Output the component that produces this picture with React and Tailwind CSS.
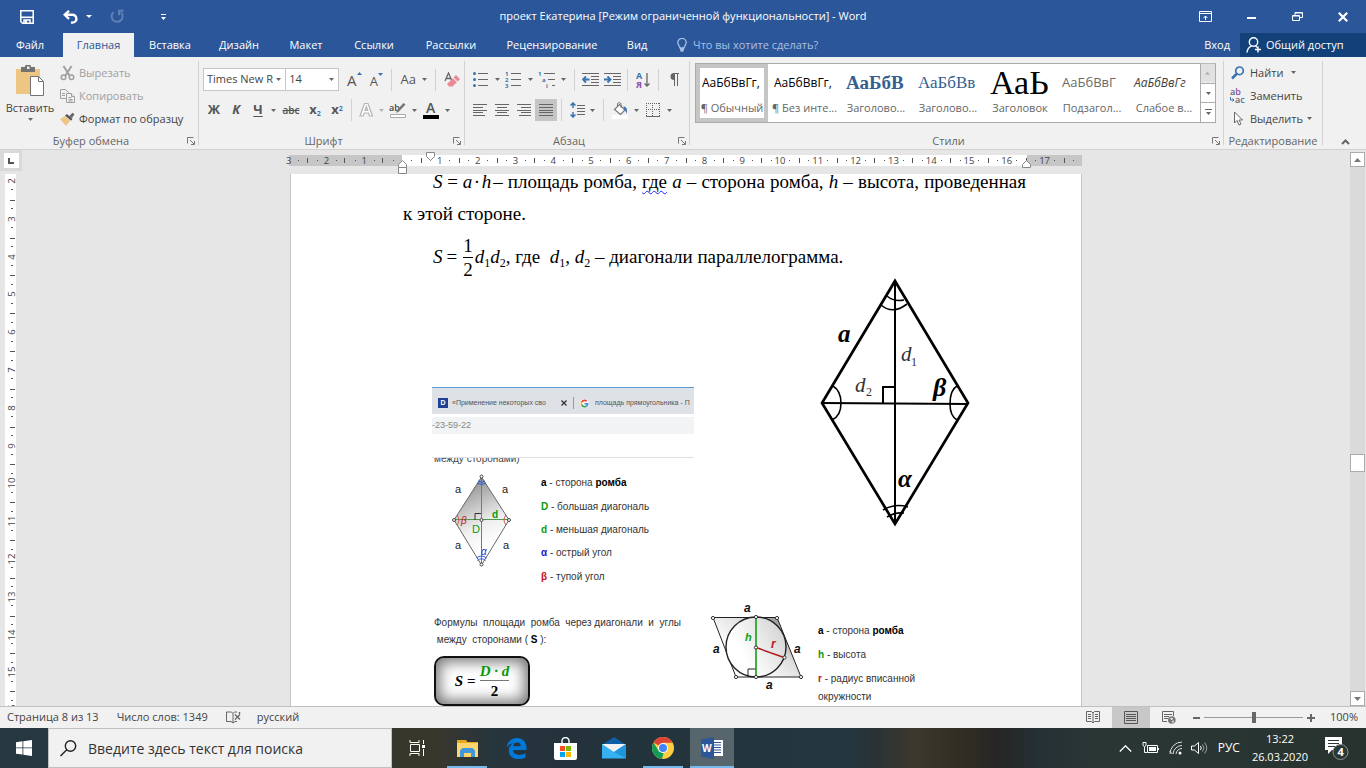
import React from "react";

const ui = "font-['Open_Sans','Noto_Sans',sans-serif]";
const serif = "font-['Liberation_Serif',serif]";

function Caret({ className = "text-[#666]" }) {
  return (
    <svg width="5" height="3" viewBox="0 0 5 3" className={className} aria-hidden="true">
      <path d="M0 0h5L2.500 3z" fill="currentColor" />
    </svg>
  );
}

function Drop({ label, light }) {
  return (
    <button aria-label={label} className="flex h-full w-[9px] items-center justify-center">
      <Caret className={light ? "text-[#b5b5b5]" : "text-[#666]"} />
    </button>
  );
}

function Sep({ className = "mx-1" }) {
  return <div className={`h-[22px] w-px shrink-0 bg-[#d2d2d2] ${className}`} />;
}

function Tool({ label, wide, active, children }) {
  return (
    <button
      aria-label={label}
      className={`flex h-[22px] shrink-0 items-center justify-center text-[#555] ${wide ? "w-6" : "w-[22px]"} ${active ? "bg-[#c5c5c5]" : ""}`}
    >
      {children}
    </button>
  );
}

function Launcher({ label }) {
  return (
    <button aria-label={label} className="absolute right-0.5 -bottom-px p-px">
      <svg width="8" height="8" viewBox="0 0 8 8" fill="none" stroke="#777">
        <path d="M.5 6.500V.5H6.500" />
        <path d="M3 3l4 4M7.500 4v3.500H4" />
      </svg>
    </button>
  );
}

function Group({ title, width, launcher, children }) {
  return (
    <section className={`my-1 flex flex-col border-r border-[#d2d2d2] ${width}`}>
      <div className="flex-1">{children}</div>
      <div className={`relative h-[13px] text-center text-[11px] leading-[18px] text-[#666] ${launcher ? "pr-4" : ""}`}>
        {title}
        {launcher && <Launcher label={`${title}: параметры`} />}
      </div>
    </section>
  );
}

function Lines({ rows }) {
  return (
    <svg width="16" height="12" viewBox="0 0 16 12" stroke="#666" aria-hidden="true">
      {rows.map(([a, b], i) => (
        <path key={i} d={`M${a} ${i * 2.75 + 0.5}H${b}`} shapeRendering="crispEdges" />
      ))}
    </svg>
  );
}

function TitleBar() {
  return (
    <header className="flex h-[33px] items-center text-white">
      <div className="flex flex-1 items-center">
        <button aria-label="Сохранить" className="ml-5">
          <svg width="14" height="14" viewBox="0 0 14 14" fill="none" stroke="#fff" strokeWidth="1.500">
            <path d="M.8.8h12.400v12.400H2.500L.8 11.500z" />
            <path d="M1 7.300h12" strokeWidth="1.600" />
            <path d="M4 13V10h6v3" />
            <path d="M5 10h2v3H5z" fill="#fff" stroke="none" />
          </svg>
        </button>
        <button aria-label="Отменить" className="ml-[29px]">
          <svg width="15" height="14" viewBox="0 0 15 14" fill="none" stroke="#fff" strokeWidth="2.400">
            <path d="M6 0.800L1.700 4.800 6 8.800" />
            <path d="M2 4.800h7.500a3.900 3.900 0 0 1 0 7.800H8" />
          </svg>
        </button>
        <button aria-label="Список отмены" className="ml-2">
          <svg width="6" height="3" viewBox="0 0 6 3"><path d="M0 0h6L3 3z" fill="#fff" /></svg>
        </button>
        <button aria-label="Повторить" className="ml-[18px]">
          <svg width="15" height="15" viewBox="0 0 15 15" fill="none" stroke="#5f7fb5" strokeWidth="2">
            <path d="M3.500 3.200a5.500 5.500 0 1 0 7.500.2" />
            <path d="M13.500 1.800H9v4.500" />
          </svg>
        </button>
        <button aria-label="Настройка панели" className="ml-[35px]">
          <svg width="7" height="6" viewBox="0 0 7 6" fill="#fff"><path d="M1 0h5v1H1zM1 3h5L3.500 6z" /></svg>
        </button>
      </div>
      <h1 className="text-[11px]">проект Екатерина [Режим ограниченной функциональности] - Word</h1>
      <div className="flex flex-1 items-center justify-end">
        <button aria-label="Параметры ленты" className="flex w-[46px] justify-center">
          <svg width="13" height="11" viewBox="0 0 13 11" fill="none" stroke="#fff">
            <path d="M.5.5h12v10H.5zM.5 2.500h12M6.500 9V5M4.500 7l2-2 2 2" />
          </svg>
        </button>
        <button aria-label="Свернуть" className="flex w-[46px] justify-center">
          <svg width="9" height="11" viewBox="0 0 9 11"><path d="M0 6h9v2H0z" fill="#fff" /></svg>
        </button>
        <button aria-label="Восстановить" className="flex w-[46px] justify-center">
          <svg width="11" height="11" viewBox="0 0 11 11" fill="none" stroke="#fff">
            <path d="M.5 4.500h7v5h-7zM.5 5h7M3 4V1.500h7.500v5H8M3 2h7" />
          </svg>
        </button>
        <button aria-label="Закрыть" className="flex w-[46px] justify-center">
          <svg width="10" height="10" viewBox="0 0 10 10" stroke="#fff" strokeWidth="2.200">
            <path d="M.8.8l8.400 8.400M9.200.8L.8 9.200" />
          </svg>
        </button>
      </div>
    </header>
  );
}

const tabs = [
  ["Файл", "w-[60px]"],
  ["Главная", "w-[77px]"],
  ["Вставка", "w-[66px]"],
  ["Дизайн", "w-[72px]"],
  ["Макет", "w-[62px]"],
  ["Ссылки", "w-[74px]"],
  ["Рассылки", "w-[80px]"],
  ["Рецензирование", "w-[122px]"],
  ["Вид", "w-[48px]"],
];

function TabBar() {
  return (
    <nav className="flex h-6 text-[11px] leading-6 text-white">
      {tabs.map(([name, width]) => (
        <button key={name} className={`flex justify-center ${width}`}>
          {name === "Главная" ? (
            <span className="w-[71px] bg-[#f1f1f1] text-[#2b579a]">{name}</span>
          ) : (
            name
          )}
        </button>
      ))}
      <label className="ml-4 flex flex-1 items-center gap-0.5 text-[#a9c0e3]">
        <svg width="10" height="14" viewBox="0 0 10 14" fill="none" stroke="#a9c0e3" strokeWidth="1.300">
          <path d="M3 10C3 8 .8 7 .8 4.600a4.200 4.200 0 0 1 8.400 0C9.200 7 7 8 7 10zM3 11.500h4M3.500 13h3" />
        </svg>
        <input
          type="text"
          placeholder="Что вы хотите сделать?"
          aria-label="Что вы хотите сделать?"
          className="w-44 bg-transparent px-1 outline-none placeholder:text-[#a9c0e3]"
        />
      </label>
      <button className="px-2.5">Вход</button>
      <button className="flex w-[126px] items-center gap-1 bg-[#124078] pl-1.5">
        <svg width="16" height="16" viewBox="0 0 16 16" fill="none" stroke="#fff" strokeWidth="1.400">
          <circle cx="7.500" cy="5" r="4.200" />
          <path d="M1 15.500c.4-3.500 2.300-5.600 4.500-6.300M9.500 9l2 1.500M12 9.500v6M9 12.500h6" />
        </svg>
        Общий доступ
      </button>
    </nav>
  );
}

function ClipboardGroup() {
  return (
    <Group title="Буфер обмена" width="w-[199px]" launcher>
      <div className="flex">
        <button className="mt-1 flex w-[60px] flex-col items-center text-[11px] text-[#444]">
          <svg width="30" height="31" viewBox="0 0 30 31">
            <path d="M1 4h24v25H1z" fill="#eec683" />
            <path d="M6 2h4a3 3 0 0 1 6 0h4v5H6z" fill="#737373" />
            <path d="M12 1.500h2.500V4H12z" fill="#f1f1f1" />
            <path d="M15.500 11.500h8l5 5v14h-13z" fill="#fff" stroke="#737373" />
            <path d="M23.500 11.500v5h5" fill="none" stroke="#737373" />
          </svg>
          <span className="mt-0.5 leading-5">Вставить</span>
          <Caret />
        </button>
        <div className="flex flex-col text-[11px] leading-[23px] text-[#444]">
          <button className="flex items-center gap-1 text-[#a0a0a0]">
            <svg width="15" height="16" viewBox="0 0 15 16" fill="none" stroke="#a0a0a0" strokeWidth="1.500">
              <path d="M3.500 1l6 9.500M11.500 1l-6 9.500" strokeWidth="2" />
              <circle cx="3.500" cy="12.300" r="2.300" />
              <circle cx="11.500" cy="12.300" r="2.300" />
            </svg>
            Вырезать
          </button>
          <button className="flex items-center gap-1 text-[#a0a0a0]">
            <svg width="15" height="14" viewBox="0 0 15 14" fill="#f1f1f1" stroke="#a0a0a0">
              <path d="M.5.5h5l3 3v6h-8zM2 4.500h3M2 6.500h3" />
              <path d="M6.500 4.500h5l3 3v6h-8z" />
              <path d="M11.500 4.500v3h3M8.500 8.500h3M8.500 10.500h4M8.500 12h4" />
            </svg>
            Копировать
          </button>
          <button className="flex items-center gap-1">
            <svg width="15" height="14" viewBox="0 0 15 14">
              <path d="M0 7l5-3 5 5-4 5z" fill="#eec683" />
              <path d="M5 3.500L7 2l5.500 5L11 8.800z" fill="#555" />
              <path d="M9 4.500L12.500.8l2 1.500L12 6z" fill="#666" />
            </svg>
            Формат по образцу
          </button>
        </div>
      </div>
    </Group>
  );
}

function FontGroup() {
  return (
    <Group title="Шрифт" width="w-[266px]" launcher>
      <div className="pt-[7px] pl-1">
        <div className="flex h-[23px] items-center">
          <div className="grid h-[23px] w-[86px] items-center border border-[#c6c6c6] bg-white">
            <select aria-label="Шрифт" className="col-start-1 row-start-1 w-full appearance-none bg-transparent pr-3 pl-[3px] text-[11px] text-[#444]">
              <option>Times New R</option>
            </select>
            <span className="pointer-events-none col-start-1 row-start-1 justify-self-end pr-1"><Caret /></span>
          </div>
          <div className="-ml-px grid h-[23px] w-[56px] items-center border border-[#c6c6c6] bg-white">
            <select aria-label="Размер шрифта" className="col-start-1 row-start-1 w-full appearance-none bg-transparent pr-4 pl-[3px] text-[11px] text-[#444]">
              <option>14</option>
            </select>
            <span className="pointer-events-none col-start-1 row-start-1 justify-self-end pr-1"><Caret /></span>
          </div>
          <div className="ml-1 flex">
            <Tool label="Увеличить размер">
              <span className="flex items-start text-[15px] leading-4">A<svg width="5" height="3" viewBox="0 0 5 3"><path d="M0 3h5L2.500 0z" fill="#3a73b0" /></svg></span>
            </Tool>
            <Tool label="Уменьшить размер">
              <span className="flex items-start pt-0.5 text-[13px] leading-4">A<svg width="5" height="3" viewBox="0 0 5 3"><path d="M0 0h5L2.500 3z" fill="#3a73b0" /></svg></span>
            </Tool>
          </div>
          <Sep />
          <Tool label="Регистр" wide><span className="text-[13px]">Aa</span></Tool>
          <Drop label="Список регистров" />
          <Sep className="ml-1.5 mr-1" />
          <Tool label="Очистить формат" wide>
            <svg width="16" height="16" viewBox="0 0 16 16">
              <path d="M1 9L4.500 1 8 9M2.200 6.500h4.500" fill="none" stroke="#666" strokeWidth="1.300" />
              <path d="M9.500 5.500l2.500-2.500 4 4-2.500 2.500zM3 12l5.800-5.800 4 4L8.500 14.500H5z" fill="#e88b96" />
            </svg>
          </Tool>
        </div>
        <div className="mt-2 flex h-[22px] items-center">
          <Tool label="Полужирный"><b className="text-[13px]">Ж</b></Tool>
          <Tool label="Курсив"><b className="text-[13px] italic">К</b></Tool>
          <Tool label="Подчеркнутый"><b className="text-[13px] underline underline-offset-2">Ч</b></Tool>
          <Drop label="Стиль подчеркивания" />
          <div className="px-0.5"><Tool label="Зачеркнутый"><span className="text-[10px] font-semibold line-through">abc</span></Tool></div>
          <Tool label="Подстрочный"><b className="text-[13px]">x<sub className="text-[7px] text-[#3a73b0]">2</sub></b></Tool>
          <Tool label="Надстрочный"><b className="text-[13px]">x<sup className="text-[7px] text-[#3a73b0]">2</sup></b></Tool>
          <Sep className="mx-[3px]" />
          <Tool label="Текстовые эффекты">
            <svg width="15" height="16" viewBox="0 0 15 16" fill="none" stroke="#b5b5b5" strokeWidth="1.200"><path d="M1 14L5.500 1.500h3.500L13.500 14h-3l-1-3H5.200l-1 3zM6 8.500h2.800L7.300 4.500z" fill="#fff" /></svg>
          </Tool>
          <Drop label="Список эффектов" light />
          <Tool label="Цвет выделения" wide>
            <svg width="18" height="18" viewBox="0 0 18 18">
              <text x="0" y="10" fontSize="9" fontWeight="600" fill="#444">ab</text>
              <path d="M7 12l1-3 6.500-7 2 1.500-6.500 7z" fill="#777" />
              <path d="M1.500 13.500h15v3h-15z" fill="#fff" stroke="#aaa" />
            </svg>
          </Tool>
          <Drop label="Цвета выделения" />
          <Tool label="Цвет текста" wide>
            <svg width="18" height="18" viewBox="0 0 18 18">
              <text x="4" y="12" fontSize="14" fontWeight="600" fill="#555">A</text>
              <path d="M1 14h16v4H1z" fill="#000" />
            </svg>
          </Tool>
          <Drop label="Цвета текста" />
        </div>
      </div>
    </Group>
  );
}

function ListIcon({ kind }) {
  const marks = { number: ["1", "2", "3"], multi: ["1", "a", "i"] };
  return (
    <svg width="18" height="22" viewBox="0 -3 18 22" aria-hidden="true">
      {[2, 8, 14].map((y, i) => {
        const dx = kind === "multi" ? i * 4 : 0;
        return (
          <g key={y}>
            {kind === "dot" ? (
              <circle cx="2.500" cy={y - 0.5} r="1.500" fill="#3a73b0" />
            ) : (
              <text x={dx} y={y + 2} fontSize="6" fontWeight="700" fill="#3a73b0">{marks[kind][i]}</text>
            )}
            <path d={`M${6 + dx} ${y - 0.5}H${kind === "multi" ? 17 : 16}`} stroke="#666" />
          </g>
        );
      })}
    </svg>
  );
}

function IndentIcon({ right }) {
  return (
    <svg width="17" height="14" viewBox="0 0 17 14" fill="none" aria-hidden="true">
      <path d="M0 .5h17M9 3.500h8M9 6.500h8M9 9.500h8M0 12.500h17" stroke="#666" />
      <path d={right ? "M0 6.500h6M3.500 3.500l3 3-3 3" : "M1.500 6.500h6M4 3.500l-3 3 3 3"} stroke="#3a73b0" strokeWidth="1.800" />
    </svg>
  );
}

function ParagraphGroup() {
  return (
    <Group title="Абзац" width="w-[225px]" launcher>
      <div className="pt-[7px] pl-1">
        <div className="flex h-[23px] items-center">
          <Tool label="Маркеры" wide><ListIcon kind="dot" /></Tool>
          <Drop label="Виды маркеров" />
          <Tool label="Нумерация" wide><ListIcon kind="number" /></Tool>
          <Drop label="Виды нумерации" />
          <Tool label="Многоуровневый список" wide><ListIcon kind="multi" /></Tool>
          <Drop label="Виды списков" />
          <Sep className="ml-1.5 mr-1" />
          <Tool label="Уменьшить отступ"><IndentIcon /></Tool>
          <Tool label="Увеличить отступ"><IndentIcon right /></Tool>
          <Sep />
          <Tool label="Сортировка">
            <svg width="14" height="20" viewBox="0 -2 14 20">
              <text x="0" y="7" fontSize="9" fontWeight="700" fill="#3a73b0">А</text>
              <text x="0" y="16" fontSize="9" fontWeight="700" fill="#8a4fa8">Я</text>
              <path d="M11 1v13M8.500 11.500L11 14l2.500-2.500" fill="none" stroke="#666" strokeWidth="1.300" />
            </svg>
          </Tool>
          <Sep />
          <Tool label="Знаки абзаца">
            <svg width="10" height="13" viewBox="0 0 10 13">
              <path d="M4.500.5H10M5.500 0v13M8.500 0v13" stroke="#666" fill="none" />
              <path d="M5 0v7A3.500 3.500 0 0 1 5 0z" fill="#666" />
            </svg>
          </Tool>
        </div>
        <div className="mt-2 flex h-[22px] items-center">
          <Tool label="По левому краю"><Lines rows={[[1, 15], [1, 11], [1, 15], [1, 11], [1, 13]]} /></Tool>
          <Tool label="По центру"><Lines rows={[[1, 15], [3, 13], [1, 15], [3, 13], [1, 15]]} /></Tool>
          <Tool label="По правому краю"><Lines rows={[[1, 15], [5, 15], [1, 15], [5, 15], [3, 15]]} /></Tool>
          <Tool label="По ширине" active><Lines rows={[[1, 15], [1, 15], [1, 15], [1, 15], [1, 15]]} /></Tool>
          <Sep />
          <Tool label="Интервал">
            <svg width="15" height="16" viewBox="0 0 15 16" fill="none">
              <path d="M3 1v5M3 10v5M.5 3.500L3 1l2.500 2.500M.5 12.500L3 15l2.500-2.500" stroke="#3a73b0" strokeWidth="1.500" />
              <path d="M7 3.500h8M7 6.500h8M7 9.500h8M7 12.500h8" stroke="#666" />
            </svg>
          </Tool>
          <Drop label="Варианты интервала" />
          <Sep className="ml-1.5 mr-1" />
          <Tool label="Заливка" wide>
            <svg width="17" height="17" viewBox="0 0 17 17">
              <path d="M0 13h16v4H0z" fill="#fff" />
              <path d="M2.500 7.500l5-5 5.500 5.500-4.500 4.500z" fill="#fff" stroke="#777" strokeWidth="1.200" />
              <path d="M5.500 5V2a1.800 1.800 0 0 1 3.500 0v4" fill="none" stroke="#777" />
              <path d="M11.500 4.500c2.500 0 4.500 2 3 7.500-.5-2-1-3.500-2-4z" fill="#3a73b0" />
            </svg>
          </Tool>
          <Drop label="Цвета заливки" />
          <Tool label="Границы" wide>
            <svg width="14" height="14" viewBox="0 0 14 14" fill="none" stroke="#666" shapeRendering="crispEdges">
              <path d="M0 .5h14M0 6.500h14M.5 0v14M6.500 0v14M13.500 0v14" strokeDasharray="1 1" />
              <path d="M0 13.500h14" />
            </svg>
          </Tool>
          <Drop label="Виды границ" />
        </div>
      </div>
    </Group>
  );
}

const styles = [
  { name: "¶ Обычный", sample: "АаБбВвГг,", look: "text-[12px] text-black" },
  { name: "¶ Без инте...", sample: "АаБбВвГг,", look: "text-[12px] text-black" },
  { name: "Заголово...", sample: "АаБбВ", look: "font-['Liberation_Serif',serif] text-[19px] font-bold text-[#365f91]" },
  { name: "Заголово...", sample: "АаБбВв", look: "font-['Liberation_Serif',serif] text-[17px] text-[#365f91]" },
  { name: "Заголовок", sample: "АаЬ", look: "font-['Liberation_Serif',serif] text-[34px] leading-[30px] text-black" },
  { name: "Подзагол...", sample: "АаБбВвГ", look: "text-[13px] text-[#6a6a6a]" },
  { name: "Слабое в...", sample: "АаБбВвГг", look: "text-[12px] italic text-[#404040]" },
];

function StylesGroup() {
  return (
    <Group title="Стили" width="w-[534px]" launcher>
      <div className="mt-0.5 mr-[7px] ml-[5px] flex h-[60px] border border-[#ababab] bg-white">
        <div className="flex flex-1">
          {styles.map((s, i) => (
            <button
              key={i}
              className={`flex w-[72px] shrink-0 flex-col items-center border-4 ${i === 0 ? "border-[#c5c5c5]" : "border-transparent"}`}
            >
              <span className={`flex h-[30px] w-[60px] items-center whitespace-nowrap ${s.look}`}>{s.sample}</span>
              <span className="w-16 text-center text-[11px] leading-5 whitespace-nowrap text-[#666]">{s.name}</span>
            </button>
          ))}
        </div>
        <div className="flex w-[15px] flex-col border-l border-[#ababab]">
          <button aria-label="Вверх" className="flex flex-1 rotate-180 items-center justify-center bg-[#e1e1e1]">
            <Caret className="text-[#aaa]" />
          </button>
          <button aria-label="Вниз" className="flex flex-1 items-center justify-center border-y border-[#ababab]">
            <Caret />
          </button>
          <button aria-label="Все стили" className="flex flex-1 items-center justify-center">
            <svg width="7" height="7" viewBox="0 0 7 7" fill="#666"><path d="M0 0h7v1H0zM1 3h5L3.500 6z" /></svg>
          </button>
        </div>
      </div>
    </Group>
  );
}

function EditingGroup() {
  return (
    <Group title="Редактирование" width="w-[99px]">
      <div className="flex flex-col pl-1.5 text-[11px] leading-[23px] text-[#444]">
        <button className="flex items-center gap-1">
          <svg width="16" height="14" viewBox="0 0 16 14" fill="none" stroke="#3a73b0">
            <circle cx="9.500" cy="4.800" r="3.800" strokeWidth="1.700" />
            <path d="M7 7.500L2 12.500" strokeWidth="2.500" />
          </svg>
          Найти
          <span className="ml-1"><Caret /></span>
        </button>
        <button className="flex items-center gap-1">
          <svg width="16" height="18" viewBox="0 0 16 18" fontSize="9" fontWeight="600" fill="#666">
            <text x="0" y="8">a<tspan fill="#8a4fa8">b</tspan></text>
            <text x="5" y="16">a<tspan fill="#3a73b0">c</tspan></text>
            <path d="M.5 10v3h3M2.500 11.500L4 13l-1.500 1.500" fill="none" stroke="#3a73b0" />
          </svg>
          Заменить
        </button>
        <button className="flex items-center gap-1">
          <svg width="16" height="15" viewBox="0 0 16 15">
            <path d="M4.500 1v11l2.500-2.500 2 4.500 2-1-2-4h3.500z" fill="#fff" stroke="#666" />
          </svg>
          Выделить
          <Caret />
        </button>
      </div>
    </Group>
  );
}

const CM = 37.8;

function Scale({ from, to }) {
  const items = [];
  for (let q = from * 4; q <= to * 4; q++) {
    const pos = (q / 4) * CM;
    if (q % 4 === 0) {
      if (q !== 0)
        items.push(
          <text key={q} x={pos} y="9" textAnchor="middle" fontSize="9.500" fill="#444">{Math.abs(q / 4)}</text>
        );
    } else if (q % 2 === 0) {
      items.push(<path key={q} d={`M${Math.round(pos)}.5 3v5`} stroke="#555" />);
    } else {
      items.push(<path key={q} d={`M${Math.round(pos)} 5h1v1h-1z`} fill="#555" />);
    }
  }
  return <g>{items}</g>;
}

function HorizontalRuler() {
  return (
    <svg width="800" height="24" viewBox="-116 0 800 24" className="mx-auto block max-w-full shrink-0" aria-hidden="true">
      <path d="M-113 5h113v11h-113zM625 5h55v11h-55z" fill="#c6c6c6" />
      <path d="M0 5h625v11H0z" fill="#fff" />
      <g transform="translate(0 5)">
        <Scale from={-3} to={17.750} />
      </g>
      <g fill="#fff" stroke="#888">
        <path d="M24.500 2.500h8v4l-4 4-4-4z" />
        <path d="M-3.500 17.500v-3l4-4 4 4v3zM-3.500 17.500h8v6h-8z" />
        <path d="M620.500 17.500v-3l4-4 4 4v3z" />
      </g>
    </svg>
  );
}

function VerticalRuler() {
  const quarters = Array.from({ length: 57 }, (_, i) => i);
  return (
    <svg width="11" height="532" viewBox="0 0 11 532" className="ml-[5px] block" aria-hidden="true">
      <path d="M0 0h11v532H0z" fill="#fff" />
      <g transform="matrix(0 -1 1 0 0 7)">
        {quarters.map((q) => {
          const x = Math.round((-q / 4) * CM);
          if (q % 4 === 0)
            return <text key={q} x={x} y="10" textAnchor="middle" fontSize="9.500" fill="#444">{q / 4 + 2}</text>;
          if (q % 2 === 0) return <path key={q} d={`M${x - 0.5} 5v5`} stroke="#555" />;
          return <path key={q} d={`M${x} 6h1v2h-1z`} fill="#555" />;
        })}
      </g>
    </svg>
  );
}

function BrowserSnippet() {
  return (
    <div className="font-['Liberation_Sans',sans-serif] text-[#444]">
      <div className="flex h-[27px] items-center overflow-hidden border-t border-[#5b9bd5] bg-[#dee1e6] pt-1 pl-1.5 text-[7px] whitespace-nowrap text-[#555]">
        <span className="flex h-[10px] w-[10px] shrink-0 items-center justify-center bg-[#1f3f94] font-bold text-white">D</span>
        <span className="ml-1 w-[105px] shrink-0">«Применение некоторых сво</span>
        <svg width="6" height="6" viewBox="0 0 6 6" stroke="#333" strokeWidth="1.300" className="ml-1 shrink-0"><path d="M.5.5l5 5M5.500.5l-5 5" /></svg>
        <span className="mx-[6px] h-3 w-px shrink-0 bg-[#999]" />
        <svg width="9" height="9" viewBox="0 0 18 18" className="shrink-0" fill="none" strokeWidth="3.400">
          <circle cx="9" cy="9" r="9" fill="#fff" />
          <path d="M13.500 4.500A6.300 6.300 0 0 0 3.500 6" stroke="#ea4335" />
          <path d="M3.500 6a6.300 6.300 0 0 0 0 6" stroke="#fbbc05" />
          <path d="M3.500 12a6.300 6.300 0 0 0 9.500 2" stroke="#34a853" />
          <path d="M13 14a6 6 0 0 0 2.300-4.500H9" stroke="#4285f4" />
        </svg>
        <span className="ml-1.5">площадь прямоугольника - П</span>
      </div>
      <div className="mt-[3px] h-[17px] bg-[#f1f3f4] text-[9px] leading-[17px] text-[#888]">-23-59-22</div>
      <div className="mt-[23px] h-[10px] overflow-hidden border-t border-[#e0e0e0] pl-0.5">
        <p className="-mt-[5px] text-[10px] leading-3">между сторонами)</p>
      </div>
      <div className="flex h-[120px]">
        <SmallRhombus />
        <ul className="mt-1 ml-[23px] grid h-[117px] grid-rows-5 items-center text-[10px] text-[#333]">
          <li><b className="text-black">a</b> - сторона <b className="text-black">ромба</b></li>
          <li><b className="text-[#0a9a0a]">D</b> - большая диагональ</li>
          <li><b className="text-[#0a9a0a]">d</b> - меньшая диагональ</li>
          <li><b className="text-[#1414c8]">α</b> - острый угол</li>
          <li><b className="text-[#c81414]">β</b> - тупой угол</li>
        </ul>
      </div>
    </div>
  );
}

function SmallRhombus() {
  return (
    <svg width="86" height="110" viewBox="432 467 86 110" className="shrink-0" fontSize="11">
      <defs>
        <linearGradient id="rhombusFill" x1="0.3" y1="0" x2="0.6" y2="1">
          <stop offset="0" stopColor="#888" />
          <stop offset="0.55" stopColor="#eee" />
          <stop offset="0.8" stopColor="#fff" />
        </linearGradient>
      </defs>
      <path d="M481.500 477L509 520l-27.500 45L454 520z" fill="url(#rhombusFill)" stroke="#666" />
      <path d="M481.500 477v88M454 519.500h55" stroke="#4a9a4a" />
      <path d="M475 520v-6.500h6" fill="none" stroke="#333" />
      <path d="M477 483q4.500 3 9 0M478 481q3.500 2.500 7 0M476.500 558q5-4 10 0M477.500 560.500q4-3.500 8 0" fill="none" stroke="#2a5ad8" />
      <path d="M457 515q4 5 0 10M506 515q-4 5 0 10" fill="none" stroke="#e05050" />
      <g fill="#fff" stroke="#444">
        <circle cx="481.500" cy="476.500" r="1.500" />
        <circle cx="481.500" cy="520" r="1.500" />
        <circle cx="481.500" cy="564.500" r="1.500" />
        <circle cx="454" cy="520" r="1.500" />
        <circle cx="509" cy="520" r="1.500" />
      </g>
      <g fill="#222">
        <text x="455" y="493">a</text>
        <text x="502" y="493">a</text>
        <text x="455" y="549">a</text>
        <text x="503" y="549">a</text>
      </g>
      <text x="472" y="533" fill="#0a9a0a">D</text>
      <text x="492" y="518" fill="#0a9a0a" fontWeight="700" fontSize="10">d</text>
      <text x="461" y="524" fill="#c81414" fontStyle="italic" fontSize="10">β</text>
      <text x="481" y="555" fill="#1f3fd8" fontStyle="italic" fontSize="10">α</text>
    </svg>
  );
}

function BigRhombus() {
  return (
    <svg width="160" height="254" viewBox="815 276 160 254" className={`-mt-2 ml-[107px] ${serif}`} fill="none" stroke="#000">
      <path d="M895 281L968 403L895 524L822 403z" strokeWidth="2.700" />
      <path d="M895 281v243" strokeWidth="2" />
      <path d="M822 403l146 1" strokeWidth="2" />
      <path d="M883 403v-16h12" strokeWidth="2" />
      <path d="M887 296q7 6 17 4M881 305q12 10 26-1M883 510q12-7 25-3M887 517q8-5 17-4" strokeWidth="1.600" />
      <path d="M833 386q8 5 8 17 0 13-9 17M957 386q-7 4-7 18 0 12 7 16" strokeWidth="1.600" />
      <g stroke="none" fill="#000" fontStyle="italic">
        <text x="838" y="342" fontSize="25" fontWeight="700">a</text>
        <text x="933" y="396" fontSize="26" fontWeight="700">β</text>
        <text x="898" y="487" fontSize="25" fontWeight="700">α</text>
        <text x="901" y="361" fontSize="21" fill="#333">d</text>
        <text x="855" y="392" fontSize="21" fill="#333">d</text>
        <text x="911" y="366" fontSize="12" fill="#333" fontStyle="normal">1</text>
        <text x="866" y="396" fontSize="12" fill="#333" fontStyle="normal">2</text>
      </g>
    </svg>
  );
}

function InscribedFigure() {
  return (
    <svg width="98" height="94" viewBox="708 600 98 94" className="shrink-0 font-['Liberation_Sans',sans-serif]" fill="none" stroke="#222">
      <defs>
        <linearGradient id="paraFill" x1="0" y1="0.700" x2="0.900" y2="0">
          <stop offset="0.200" stopColor="#fff" />
          <stop offset="0.600" stopColor="#ddd" />
          <stop offset="1" stopColor="#777" />
        </linearGradient>
        <linearGradient id="discFill" x1="0" y1="0.600" x2="1" y2="0">
          <stop offset="0.200" stopColor="#fff" />
          <stop offset="1" stopColor="#ccc" />
        </linearGradient>
      </defs>
      <path d="M713 617.500h64L801 677h-65z" fill="url(#paraFill)" />
      <circle cx="756" cy="647" r="30" fill="url(#discFill)" strokeWidth="1.400" />
      <path d="M748 677v-8h8" />
      <path d="M756 617v60" stroke="#12a012" strokeWidth="1.600" />
      <path d="M756 647.500l28 10" stroke="#b01818" strokeWidth="1.400" />
      <g fill="#fff" stroke="#333">
        <circle cx="713" cy="618" r="1.600" /><circle cx="777" cy="618" r="1.600" />
        <circle cx="756" cy="617" r="1.600" /><circle cx="756" cy="647.500" r="1.600" />
        <circle cx="784.500" cy="657.500" r="1.600" /><circle cx="736" cy="677" r="1.600" />
        <circle cx="756" cy="677" r="1.600" /><circle cx="801" cy="677" r="1.600" />
      </g>
      <g stroke="none" fill="#111" fontSize="12" fontWeight="700" fontStyle="italic">
        <text x="744" y="612">a</text>
        <text x="713" y="653">a</text>
        <text x="794" y="653">a</text>
        <text x="766" y="689">a</text>
        <text x="745" y="641" fontSize="11" fill="#12a012">h</text>
        <text x="771" y="648" fill="#c01818">r</text>
      </g>
    </svg>
  );
}

function Index({ children }) {
  return <span className="translate-y-1.5 text-[12px] not-italic">{children}</span>;
}

function Page() {
  return (
    <article className={`mx-auto w-[792px] max-w-full flex-1 overflow-hidden border-x border-[#c6c6c6] bg-white text-black ${serif}`}>
      <div className="-mt-2 pr-[55px] pl-28 text-[19px] leading-8">
        <p>
          <span className="flex items-center pl-[30px]">
            <span className="whitespace-nowrap"><i>S</i> = <i>a</i>&#8202;·&#8202;<i>h</i></span>
            <span className="flex-1 pl-0.5 whitespace-nowrap [text-align-last:justify]">
              – площадь ромба, <span className="underline decoration-[#2020ff] decoration-wavy decoration-1 underline-offset-2 [text-decoration-skip-ink:none]">где</span> <i>a</i> – сторона ромба, <i>h</i> – высота, проведенная
            </span>
          </span>
          к этой стороне.
        </p>
        <p className="flex h-[54px] items-center pl-[30px] whitespace-pre">
          <i>S</i>
          <span className="px-1">=</span>
          <span className="flex flex-col px-0.5 text-center leading-[23px]">
            <span className="h-6 border-b border-black">1</span>
            <span>2</span>
          </span>
          <i className="flex">d<Index>1</Index></i>
          <i className="flex">d<Index>2</Index></i>
          <span>, где  </span>
          <i className="flex">d<Index>1</Index></i>
          <span>, </span>
          <i className="flex">d<Index>2</Index></i>
          <span> – диагонали параллелограмма.</span>
        </p>
      </div>
      <div className="flex pl-[141px]">
        <div className="w-[262px] pt-[103px]">
          <BrowserSnippet />
          <p className="mt-[27px] pl-0.5 font-['Liberation_Sans',sans-serif] text-[10px] leading-[17px] whitespace-pre text-[#333]">
            Формулы  площади  ромба  через диагонали  и  углы{"\n"} между  сторонами ( <b className="text-black">S</b> ):
          </p>
          <div className="mt-2 ml-0.5 flex h-[50px] w-24 items-center justify-center gap-1 rounded-[10px] border-2 border-[#111] text-[15px] font-bold shadow-[inset_0_0_14px_4px_#777]">
            <i>S</i>
            <span>=</span>
            <span className="flex flex-col text-center leading-[17px]">
              <i className="border-b border-[#777] text-[#0a9a0a]">D · d</i>
              <span className="pt-0.5">2</span>
            </span>
          </div>
        </div>
        <div className="ml-3.5">
          <BigRhombus />
          <div className="mt-[70px] flex">
            <InscribedFigure />
            <ul className="mt-[19px] ml-3 font-['Liberation_Sans',sans-serif] text-[10px] leading-6 text-[#333]">
              <li><b className="text-black">a</b> - сторона <b className="text-black">ромба</b></li>
              <li><b className="text-[#0a9a0a]">h</b> - высота</li>
              <li><b className="text-[#c81414]">r</b> - радиус вписанной</li>
              <li className="leading-[11px]">окружности</li>
            </ul>
          </div>
        </div>
      </div>
    </article>
  );
}

function Workspace() {
  return (
    <main className="flex min-h-0 flex-1 bg-[#e6e6e6]">
      <div className="flex w-[22px] shrink-0 flex-col overflow-hidden">
        <div className="mb-[3px] flex h-[21px] items-center justify-center bg-[#d9d9d9]">
          <button aria-label="Табуляция" className="flex h-[15px] w-[15px] items-center justify-center bg-white">
            <svg width="6" height="6" viewBox="0 0 6 6"><path d="M1 0v5h5" fill="none" stroke="#555" strokeWidth="2" /></svg>
          </button>
        </div>
        <VerticalRuler />
      </div>
      <div className="flex min-w-0 flex-1 flex-col">
        <HorizontalRuler />
        <Page />
      </div>
      <div className="mt-0.5 mr-px flex w-[15px] shrink-0 flex-col bg-[#dadada]">
        <button aria-label="Прокрутить вверх" className="flex h-[15px] items-center justify-center border border-[#ababab] bg-white">
          <svg width="7" height="4" viewBox="0 0 7 4"><path d="M0 4h7L3.500 0z" fill="#777" /></svg>
        </button>
        <div className="grow-[287]" />
        <div className="h-[18px] border border-[#ababab] bg-white" />
        <div className="grow-[219]" />
        <button aria-label="Прокрутить вниз" className="flex h-[15px] items-center justify-center border border-[#ababab] bg-white">
          <svg width="7" height="4" viewBox="0 0 7 4"><path d="M0 0h7L3.500 4z" fill="#777" /></svg>
        </button>
      </div>
    </main>
  );
}

function StatusBar() {
  return (
    <footer className="flex h-[22px] shrink-0 items-center border-t border-[#c0c0c0] bg-[#f1f1f1] pl-[7px] text-[11px] text-[#444]">
      <span>Страница 8 из 13</span>
      <span className="ml-[18px]">Число слов: 1349</span>
      <button aria-label="Правописание" className="ml-[18px]">
        <svg width="15" height="13" viewBox="0 0 15 13" fill="none" stroke="#666">
          <path d="M7 2.500L5.500 1H.5v9.500H5L7 12l2-1.500h2M7 2.500V12M7 2.500L8.500 1H11" />
          <path d="M9 3.500l5 5M14 3.500l-5 5M13.500 1v2" strokeWidth="1.400" />
        </svg>
      </button>
      <span className="ml-4 flex-1">русский</span>
      <button aria-label="Режим чтения" className="flex h-full w-[38px] items-center justify-center">
        <svg width="14" height="13" viewBox="0 0 14 13" fill="none" stroke="#666">
          <path d="M7 2L5.500.5h-5v10h5L7 12l1.500-1.500h5v-10h-5zM7 2v10M2 3.500h3M2 5.500h3M2 7.500h3M9 3.500h3M9 5.500h3M9 7.500h3" />
        </svg>
      </button>
      <button aria-label="Разметка страницы" className="flex h-full w-[38px] items-center justify-center bg-[#c8c8c8]">
        <svg width="14" height="13" viewBox="0 0 14 13" fill="none" stroke="#555">
          <path d="M.5.5h13v12H.5zM2 3.500h10M2 5.500h10M2 7.500h10M2 9.500h10" />
        </svg>
      </button>
      <button aria-label="Веб-документ" className="flex h-full w-[38px] items-center justify-center">
        <svg width="14" height="13" viewBox="0 0 14 13">
          <path d="M11.500 5V.5H.5v10H5M2 3.500h8M2 5.500h5M2 7.500h4" fill="none" stroke="#666" />
          <circle cx="9.800" cy="9" r="3.800" fill="#777" />
          <path d="M8 7.500l2-1 1 1.500-1.500 1zM10 10l2-.5-.5 2-1 .5z" fill="#f1f1f1" />
        </svg>
      </button>
      <button aria-label="Уменьшить" className="flex w-4 justify-center"><span className="h-0.5 w-[7px] bg-[#666]" /></button>
      <input
        type="range"
        min="0"
        max="100"
        defaultValue="50"
        aria-label="Масштаб"
        className="h-[11px] w-[99px] appearance-none bg-[linear-gradient(#999,#999)] bg-[length:100%_1px] bg-center bg-no-repeat [&::-webkit-slider-thumb]:h-[11px] [&::-webkit-slider-thumb]:w-1 [&::-webkit-slider-thumb]:appearance-none [&::-webkit-slider-thumb]:bg-[#666]"
      />
      <button aria-label="Увеличить" className="flex w-4 justify-center">
        <svg width="8" height="8" viewBox="0 0 8 8" stroke="#666" strokeWidth="2"><path d="M0 4h8M4 0v8" /></svg>
      </button>
      <span className="w-[47px] pr-2 text-right">100%</span>
    </footer>
  );
}

function TaskItem({ label, open, active, children }) {
  return (
    <button
      aria-label={label}
      className={`relative mr-[5px] flex h-full w-11 items-center justify-center ${active ? "bg-[#56666c]" : ""}`}
    >
      {children}
      {open && <span className={`absolute bottom-0 h-0.5 bg-[#76b9ed] ${active ? "inset-x-0" : "inset-x-0.5"}`} />}
    </button>
  );
}

function Taskbar() {
  return (
    <div className="flex h-10 shrink-0 items-center bg-[linear-gradient(90deg,#263740_0%,#2b3a3d_20%,#37362b_29%,#38372c_32%,#27353d_36%,#23323b_42%,#24373f_62%,#2a3236_64%,#3d382c_67%,#332e24_70%,#272625_73%,#243034_76%,#2a3735_80%,#28332f_100%)] text-white">
      <button aria-label="Пуск" className="flex h-full w-12 items-center justify-center">
        <svg width="16" height="16" viewBox="0 0 16 16" fill="#fff"><path d="M0 2.200L6.500 1.300v6.200H0zM7.300 1.200L16 0v7.500H7.300zM0 8.300h6.500v6.300L0 13.700zM7.300 8.300H16V16l-8.700-1.200z" /></svg>
      </button>
      <label className="flex h-full w-[344px] items-center border border-[#c0c0c0] bg-[#f1f1f1] pl-[11px]">
        <svg width="17" height="17" viewBox="0 0 17 17" fill="none" stroke="#222" strokeWidth="1.400">
          <circle cx="10.500" cy="6" r="5.200" />
          <path d="M6.800 9.700L.5 16" />
        </svg>
        <input
          type="text"
          aria-label="Поиск"
          placeholder="Введите здесь текст для поиска"
          className="ml-[11px] min-w-0 flex-1 bg-transparent text-[14px] outline-none placeholder:text-[#333]"
        />
      </label>
      <button aria-label="Представление задач" className="flex h-full w-[50px] items-center justify-center">
        <svg width="17" height="16" viewBox="0 0 17 16" fill="none" stroke="#fff">
          <path d="M1 0v2.500h9V0M1 16v-2.500h9V16M1.500 4.500h9v7h-9zM14.500 0v4M14.500 9v7" />
          <path d="M13 5h3v3h-3z" fill="#fff" stroke="none" />
        </svg>
      </button>
      <div className="flex h-full flex-1 pl-[3px]">
        <TaskItem label="Проводник" open>
          <svg width="23" height="19" viewBox="0 0 23 19">
            <path d="M1 1h9l1.500 2H22v15H1z" fill="#e8a820" />
            <path d="M1 4h21v14H1z" fill="#ffd66e" />
            <path d="M4 18v-6.500L6.500 9h10l2.500 2.500V18h-4v-4H8v4z" fill="#3f97dd" />
          </svg>
        </TaskItem>
        <TaskItem label="Edge">
          <svg width="21" height="21" viewBox="0 0 21 21"><path d="M0.500 9.500C1.500 3.500 5.500 0 11 0c5.500 0 9.500 4 9.500 9.500V12H7c.2 3 2.500 4.800 6 4.800 2.500 0 4.500-.6 6.500-1.600v4.200C17.500 20.500 15 21 12.300 21 6.500 21 2.800 17.800 2.800 12.500c0-3.200 1.500-5.800 4.700-7.500C4.200 5.500 2 7.300.5 9.500zM7.200 8.300h7.600c0-2.300-1.300-3.700-3.700-3.700-2.200 0-3.600 1.500-3.900 3.700z" fill="#0078d7" /></svg>
        </TaskItem>
        <TaskItem label="Магазин">
          <svg width="23" height="23" viewBox="0 0 23 23">
            <path d="M8 7V4a3.500 3.500 0 0 1 7 0v3" fill="none" stroke="#fff" strokeWidth="1.400" />
            <path d="M0 6h23v15q0 2-2 2H2q-2 0-2-2z" fill="#fff" />
            <path d="M6 9h5v5H6z" fill="#f25022" /><path d="M12 9h5v5h-5z" fill="#7fba00" />
            <path d="M6 15h5v5H6z" fill="#00a4ef" /><path d="M12 15h5v5h-5z" fill="#ffb900" />
          </svg>
        </TaskItem>
        <TaskItem label="Почта">
          <svg width="24" height="22" viewBox="0 0 24 22">
            <path d="M0 8L12 0l12 8v3H0z" fill="#0f5fa8" />
            <path d="M0 7h24v14.500H0z" fill="#35b0f0" />
            <path d="M0 7h24L12 15z" fill="#f3f3f3" />
            <path d="M24 7v14.500L12 15z" fill="#1f96dc" />
          </svg>
        </TaskItem>
        <TaskItem label="Chrome" open>
          <svg width="22" height="22" viewBox="0 0 22 22">
            <circle cx="11" cy="11" r="11" fill="#ffcd40" />
            <path d="M11 11L1.500 5.500A11 11 0 0 1 20.600 5.700H11z" fill="#db4437" />
            <path d="M1.500 5.500L7 14.500 11.500 16 10 21.950A11 11 0 0 1 1.500 5.500z" fill="#0f9d58" />
            <circle cx="11" cy="11" r="5" fill="#fff" />
            <circle cx="11" cy="11" r="4" fill="#4285f4" />
          </svg>
        </TaskItem>
        <TaskItem label="Word" open active>
          <svg width="22" height="22" viewBox="0 0 22 22">
            <path d="M12 3h10v16H12z" fill="#fff" />
            <path d="M13 5.500h7M13 8h7M13 10.500h7M13 13h7M13 15.500h7" stroke="#2b579a" />
            <path d="M0 2.500L13 0v22L0 19.500z" fill="#2b579a" />
            <text x="1" y="15" fontSize="10" fontWeight="700" fill="#fff">W</text>
          </svg>
        </TaskItem>
      </div>
      <div className="flex h-full items-center text-[12px]">
        <button aria-label="Скрытые значки">
          <svg width="13" height="7" viewBox="0 0 13 7" fill="none" stroke="#fff" strokeWidth="1.300"><path d="M.8 6.500l5.700-5.700 5.700 5.700" /></svg>
        </button>
        <svg width="17" height="14" viewBox="0 0 17 14" className="ml-2.5" fill="none" stroke="#fff">
          <path d="M1 1.500v3q1.500 2 3 0v-3zM2.500 6v5.500H5M5.500 4.500h10v7h-10zM16.500 7v2" />
          <path d="M7 6h7v4H7z" fill="#fff" stroke="none" />
        </svg>
        <svg width="14" height="14" viewBox="0 0 14 14" className="ml-2.5" fill="none" stroke="#ddd">
          <path d="M1 13A12 12 0 0 1 13 1M4 13a9 9 0 0 1 9-8.500M7 13a6 6 0 0 1 6-5.500M.5 10l3 3" />
          <circle cx="11" cy="12" r="1.500" fill="#fff" stroke="none" />
        </svg>
        <svg width="17" height="14" viewBox="0 0 17 14" className="ml-2" fill="none" stroke="#fff">
          <path d="M.5 5h3l4-3.500v11l-4-3.500h-3zM9.500 5q1.500 2 0 4" />
          <path d="M11.500 3.500q3 3.500 0 7M13.500 1.500q4.500 5.500 0 11" stroke="#9aa3a3" />
        </svg>
        <span className="ml-2.5">РУС</span>
        <div className="ml-3 text-center text-[11px] leading-[18px]">
          <div>13:22</div>
          <div>26.03.2020</div>
        </div>
        <button aria-label="Уведомления" className="mr-4 ml-4">
          <svg width="26" height="26" viewBox="0 0 26 26">
            <path d="M1 2h17v13H8l-4 4v-4H1z" fill="#fff" />
            <path d="M4 5.500h11M4 8.500h11M4 11.500h7" stroke="#2a3735" />
            <circle cx="16.500" cy="17" r="7.500" fill="#2a3735" stroke="#8a9290" />
            <text x="13.500" y="21" fontSize="11" fontWeight="700" fill="#fff">4</text>
          </svg>
        </button>
      </div>
    </div>
  );
}

export default function App() {
  return (
    <div className={`flex h-screen flex-col overflow-hidden bg-[#e6e6e6] ${ui}`}>
      <div className="shrink-0 bg-[#2b579a]">
        <TitleBar />
        <TabBar />
      </div>
      <div className="flex h-[93px] shrink-0 border-b border-[#d2d2d2] bg-[#f1f1f1]">
        <ClipboardGroup />
        <FontGroup />
        <ParagraphGroup />
        <StylesGroup />
        <EditingGroup />
        <button aria-label="Свернуть ленту" className="ml-auto self-end pr-4 pb-1">
          <svg width="9" height="6" viewBox="0 0 9 6" fill="none" stroke="#666" strokeWidth="2"><path d="M1 5l3.500-3.500L8 5" /></svg>
        </button>
      </div>
      <Workspace />
      <StatusBar />
      <Taskbar />
    </div>
  );
}
